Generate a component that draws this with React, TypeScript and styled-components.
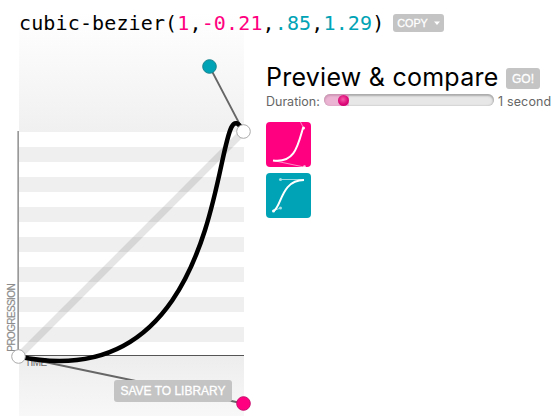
import React from "react";
import styled, { createGlobalStyle } from "styled-components";

const PINK = "#ff0080";
const TEAL = "#00a3b5";

const GlobalStyle = createGlobalStyle`
  * { box-sizing: border-box; }
  html, body { margin: 0; background: #fff; overflow: hidden; }
`;

const Page = styled.div`
  display: grid;
  grid-template-columns: 225px 1fr;
  grid-template-rows: 62px 354px;
  column-gap: 22px;
  width: 555px;
  height: 416px;
  padding-left: 19px;
  overflow: hidden;
  font-family: "Liberation Sans", Arial, sans-serif;
`;

const Header = styled.header`
  grid-column: 1 / 3;
  grid-row: 1;
  z-index: 1;
  display: flex;
  align-items: flex-start;
`;

const Formula = styled.h1`
  margin: 9px 8px 0 0;
  width: 366px;
  font: 400 20px/28px "DejaVu Sans Mono", monospace;
  letter-spacing: 0.135px;
  color: #000;
  white-space: nowrap;
`;

const Param = styled.span<{ $color: string }>`
  color: ${(p) => p.$color};
`;

const Button = styled.button<{ $w: number; $h: number; $size: number }>`
  display: flex;
  align-items: center;
  justify-content: center;
  gap: 6px;
  width: ${(p) => p.$w}px;
  height: ${(p) => p.$h}px;
  padding: 0;
  border: 0;
  border-radius: 3px;
  background: #c4c4c4;
  color: #fff;
  font: 400 ${(p) => p.$size}px/1 "Liberation Sans", Arial, sans-serif;
  -webkit-text-stroke: 0.3px #fff;
  white-space: nowrap;
`;

const CopySlot = styled.div`
  margin-top: 14px;
`;

const Plot = styled.section`
  grid-column: 1;
  grid-row: 1 / 3;
  position: relative;
  display: grid;
  grid-template-rows: 132px 223px 61px;
`;

const TopFade = styled.div`
  background: linear-gradient(#fff 10%, #f0f0f0);
`;

const Stripes = styled.div`
  background: repeating-linear-gradient(#fff 0 15px, #efefef 15px 30px);
`;

const BottomFade = styled.div`
  border-top: 1px solid #555;
  background: linear-gradient(#ededed, #f8f8f8);
`;

const AxisLabel = styled.span<{ $vertical?: boolean }>`
  position: absolute;
  font-size: 10px;
  line-height: 10px;
  color: ${(p) => (p.$vertical ? "#8c8c8c" : "#666")};
  ${(p) =>
    p.$vertical
      ? "left: -12px; top: 284px; writing-mode: vertical-rl; transform: rotate(180deg); letter-spacing: -0.62px; -webkit-text-stroke: 0.2px #8c8c8c;"
      : "left: 6px; top: 358px; letter-spacing: -0.6px;"}
`;

const Curve = styled.svg`
  position: absolute;
  left: -19px;
  top: 0;
`;

const SaveSlot = styled.div`
  position: absolute;
  left: 95px;
  top: 380px;
`;

const Preview = styled.section`
  grid-column: 2;
  grid-row: 2;
  display: flex;
  flex-direction: column;
`;

const TitleRow = styled.div`
  display: flex;
  align-items: flex-start;
  height: 31px;
`;

const Title = styled.h2`
  margin: 0;
  width: 240px;
  font: 400 25px/31px Inter, "Liberation Sans", sans-serif;
  letter-spacing: 0.25px;
  white-space: nowrap;
`;

const GoSlot = styled.div`
  margin-top: 6px;
`;

const DurationRow = styled.div`
  display: flex;
  align-items: center;
  height: 15px;
  font: 400 12.5px/15px Inter, "Liberation Sans", sans-serif;
  color: #666;
  white-space: nowrap;
`;

const DurationLabel = styled.label`
  width: 58px;
  padding-top: 2px;
`;

const Seconds = styled.span`
  padding-top: 2px;
  letter-spacing: 0.15px;
`;

const Track = styled.div`
  display: flex;
  align-items: center;
  width: 170px;
  height: 12px;
  margin: -1px 4px 0 0;
  border-radius: 6px;
  background: #e7e7e7;
  box-shadow: inset 0 1px 2px 1px #aaa;
`;

const Fill = styled.div`
  display: flex;
  align-items: center;
  justify-content: flex-end;
  width: 25px;
  height: 12px;
  border-radius: 6px 0 0 6px;
  background: rgba(240, 130, 190, 0.5);
`;

const Thumb = styled.div`
  width: 11px;
  height: 11px;
  border-radius: 50%;
  background: radial-gradient(circle at 45% 40%, #f45aa6, #dd0878 55%, #b80063);
`;

const Samples = styled.div`
  display: grid;
  gap: 6px;
  margin-top: 14px;
`;

const Sample = styled.div<{ $color: string }>`
  width: 45px;
  height: 45px;
  border-radius: 4px;
  background: ${(p) => p.$color};
  overflow: hidden;
`;

export default function App() {
  return (
    <>
      <GlobalStyle />
      <Page>
        <Header>
          <Formula>
            cubic-bezier(<Param $color={PINK}>1</Param>,<Param $color={PINK}>-0.21</Param>,
            <Param $color={TEAL}>.85</Param>,<Param $color={TEAL}>1.29</Param>)
          </Formula>
          <CopySlot>
            <Button $w={51} $h={18} $size={10.8}>
              COPY
              <svg width="6" height="4" viewBox="0 0 6 4">
                <path d="M0 .5H6L3 4Z" fill="#fff" />
              </svg>
            </Button>
          </CopySlot>
        </Header>
        <Plot>
          <TopFade />
          <Stripes />
          <BottomFade />
          <AxisLabel $vertical>PROGRESSION</AxisLabel>
          <AxisLabel>TIME</AxisLabel>
          <Curve width="260" height="416" viewBox="0 0 260 416">
            <path d="M17.5 131V356" stroke="#bbb" />
            <path d="M18.5 131V356" stroke="#999" />
            <path d="M18.5 356.5L243.5 131.5" stroke="#000" strokeOpacity=".1" strokeWidth="7" />
            <path d="M18.5 356.5L243.5 403.5M243.5 131.5L209.5 66.5" stroke="#666" strokeWidth="1.8" />
            <path
              d="M18.5 356.5C243.5 403.5 209.5 66.5 243.5 131.5"
              fill="none"
              stroke="#000"
              strokeWidth="4.5"
            />
            <circle cx="18.5" cy="356.5" r="6.8" fill="#fff" stroke="#aaa" />
            <circle cx="243.5" cy="131.5" r="6.8" fill="#fff" stroke="#aaa" />
            <circle cx="209.5" cy="66.5" r="6.8" fill={TEAL} stroke="#16838f" />
            <circle cx="243.5" cy="403.5" r="6.8" fill={PINK} stroke="#c60b6b" />
          </Curve>
          <SaveSlot>
            <Button $w={118} $h={22} $size={12}>
              SAVE TO LIBRARY
            </Button>
          </SaveSlot>
        </Plot>
        <Preview>
          <TitleRow>
            <Title>Preview &amp; compare</Title>
            <GoSlot>
              <Button $w={34} $h={21} $size={12}>
                GO!
              </Button>
            </GoSlot>
          </TitleRow>
          <DurationRow>
            <DurationLabel>Duration:</DurationLabel>
            <Track>
              <Fill>
                <Thumb />
              </Fill>
            </Track>
            <Seconds>1 second</Seconds>
          </DurationRow>
          <Samples>
            <Sample $color={PINK}>
              <svg width="45" height="45" viewBox="0 0 45 45" fill="none" stroke="#fff">
                <path d="M7 38.5L38 45M37.5 6L34 -1" strokeWidth="1" strokeOpacity=".55" />
                <path d="M7 38.5C29 41.5 32 23 37 6" strokeWidth="2" />
                <circle cx="37.5" cy="6" r="1.5" fill="#fff" stroke="none" />
                <circle cx="38.5" cy="44.5" r="1.3" fill="#fff" stroke="none" opacity=".8" />
              </svg>
            </Sample>
            <Sample $color={TEAL}>
              <svg width="45" height="45" viewBox="0 0 45 45" fill="none" stroke="#fff">
                <path d="M8 37.5L14.5 35M14.5 6.5H38" strokeWidth="1" strokeOpacity=".6" />
                <path d="M7.5 38C15.5 35 14.5 7 38 7" strokeWidth="2" />
                <circle cx="14.5" cy="6.5" r="1.5" fill="#a6dfe5" stroke="none" />
                <circle cx="14.5" cy="35" r="1.5" fill="#a6dfe5" stroke="none" />
                <circle cx="7.5" cy="38" r="1.5" fill="#fff" stroke="none" />
              </svg>
            </Sample>
          </Samples>
        </Preview>
      </Page>
    </>
  );
}
